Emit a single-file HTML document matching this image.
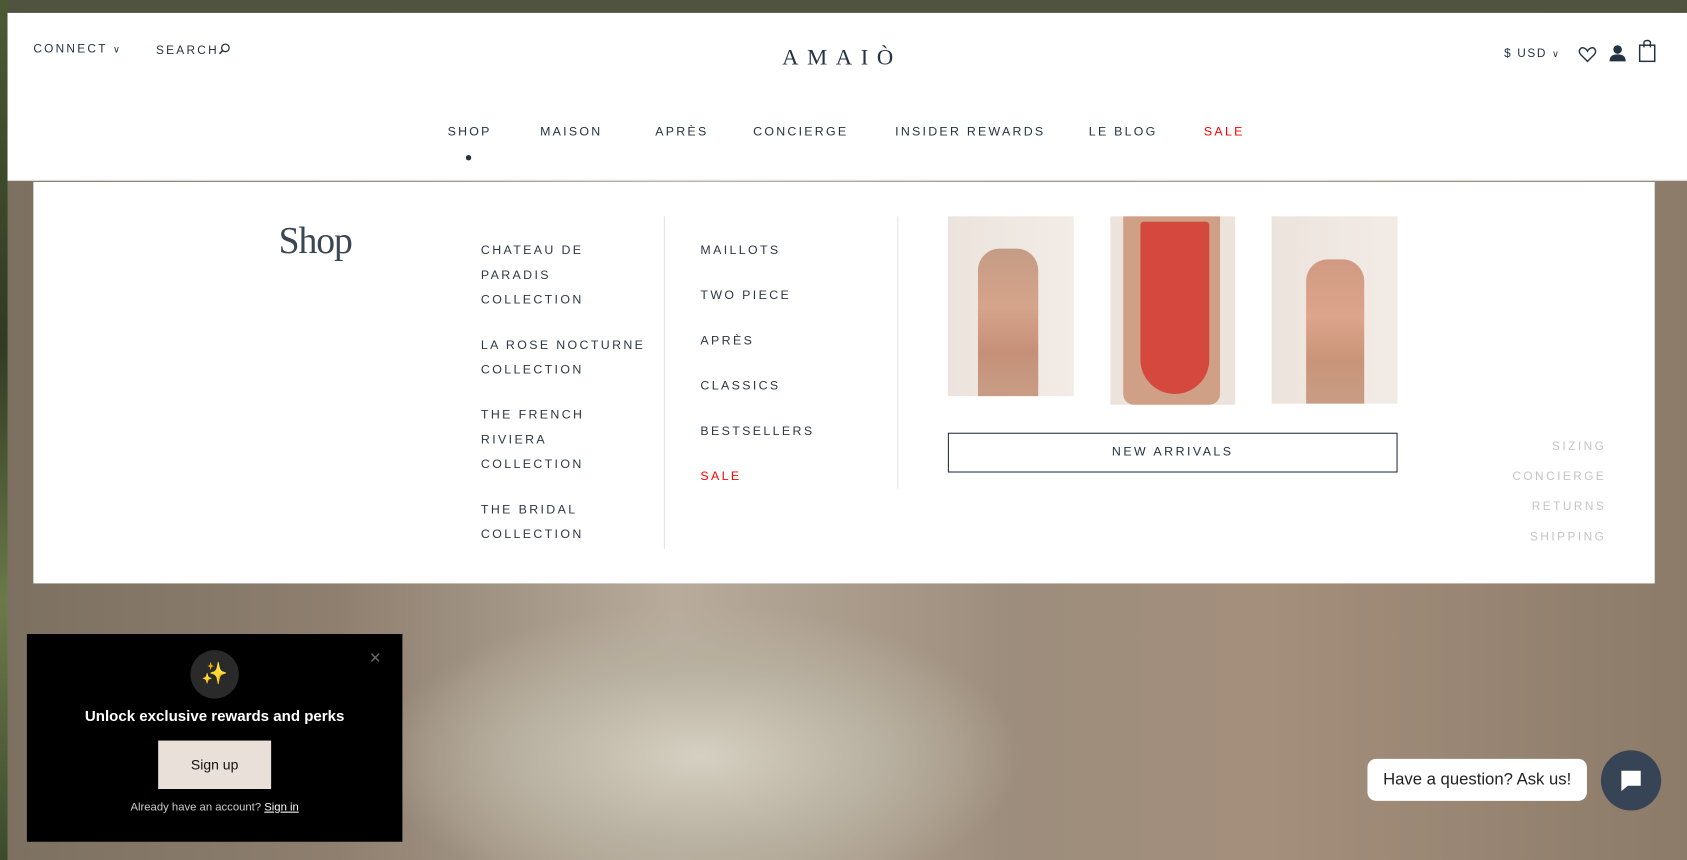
<!DOCTYPE html>
<html><head><meta charset="utf-8"><style>
*{margin:0;padding:0;box-sizing:border-box}
html,body{width:1687px;height:859px;overflow:hidden;background:#8a7c6c}
#w{position:absolute;left:0;top:0;width:1568px;height:799px;transform:scale(1.07589,1.0764);transform-origin:0 0;font-family:"Liberation Sans",sans-serif;color:#243342;overflow:hidden}
.a{position:absolute}
.bg{left:0;top:0;width:1568px;height:799px;background:linear-gradient(90deg,#7c7060 0%,#8e7f6f 20%,#b8ab9c 40%,#9d8d7c 60%,#a48f7c 75%,#8c7b69 100%)}
.nav{font-size:11.5px;letter-spacing:2.1px;white-space:nowrap}
.m{font-size:11.5px;letter-spacing:2.2px;line-height:23px;white-space:nowrap;color:#2c3845}
.r{font-size:11px;letter-spacing:2.3px;color:#c4c4c4;right:75px;text-align:right}
</style></head><body><div id="w">
<div class="a bg"></div>
<div class="a" style="left:0;top:0;width:7px;height:799px;background:linear-gradient(#4c5a34,#2f3b22 40%,#6b7a4a 70%,#3b4a2c)"></div>
<div class="a" style="left:350px;top:560px;width:600px;height:239px;background:radial-gradient(ellipse at 50% 60%,#d6d0c2 0%,#b8b0a0 40%,rgba(0,0,0,0) 70%)"></div>
<div class="a" style="left:7px;top:0;width:1561px;height:12px;background:#50533f"></div>
<div class="a" style="left:7px;top:12px;width:1561px;height:156px;background:#fff;border-bottom:1px solid #ddd"></div>
<div class="a nav" style="left:31px;top:40px;font-size:11px">CONNECT <span style="font-size:9px">&#8744;</span></div>
<div class="a nav" style="left:145px;top:40px;font-size:11px">SEARCH<svg width="11" height="11" viewBox="0 0 11 11" style="vertical-align:-1px"><circle cx="6.5" cy="4.5" r="3.5" fill="none" stroke="#243342" stroke-width="1.2"/><path d="M4 7L1 10" stroke="#243342" stroke-width="1.4"/></svg></div>
<div class="a" style="left:727px;top:41px;font-family:'Liberation Serif',serif;font-size:21px;letter-spacing:8px;color:#243342">AMAIÒ</div>
<div class="a nav" style="left:1398px;top:44px;font-size:11px;letter-spacing:1.5px">$ USD <span style="font-size:9px">&#8744;</span></div>
<svg class="a" style="left:1467px;top:43px" width="17" height="15" viewBox="0 0 17 15"><path d="M8.5 14L2 7.5C-0.5 4.5 2 0.5 5 1.5C6.5 2 8 3.5 8.5 4.5C9 3.5 10.5 2 12 1.5C15 0.5 17.5 4.5 15 7.5Z" fill="none" stroke="#243342" stroke-width="1.3"/></svg>
<svg class="a" style="left:1495px;top:41px" width="17" height="17" viewBox="0 0 17 17"><circle cx="8.5" cy="5" r="4" fill="#243342"/><path d="M1 16C1 11 4 9.5 8.5 9.5S16 11 16 16Z" fill="#243342"/></svg>
<svg class="a" style="left:1523px;top:36px" width="16" height="22" viewBox="0 0 16 22"><rect x="1" y="6" width="14" height="15" fill="none" stroke="#243342" stroke-width="1.4"/><path d="M5 8V3.5C5 1 11 1 11 3.5V8" fill="none" stroke="#243342" stroke-width="1.3"/></svg>
<div class="a nav" style="left:416px;top:117px">SHOP</div>
<div class="a" style="left:433px;top:144px;width:5px;height:5px;border-radius:50%;background:#243342"></div>
<div class="a nav" style="left:502px;top:117px">MAISON</div>
<div class="a nav" style="left:609px;top:117px">APRÈS</div>
<div class="a nav" style="left:700px;top:117px">CONCIERGE</div>
<div class="a nav" style="left:832px;top:117px">INSIDER REWARDS</div>
<div class="a nav" style="left:1012px;top:117px">LE BLOG</div>
<div class="a nav" style="left:1119px;top:117px;color:#f00">SALE</div>
<div class="a" style="left:31px;top:169px;width:1507px;height:373px;background:#fff"></div>
<div class="a" style="left:259px;top:204px;font-family:'Liberation Serif',serif;font-size:35px;color:#3a4652;letter-spacing:-1px">Shop</div>
<div class="a m" style="left:447px;top:222px">CHATEAU DE<br>PARADIS<br>COLLECTION</div>
<div class="a m" style="left:447px;top:310px">LA ROSE NOCTURNE<br>COLLECTION</div>
<div class="a m" style="left:447px;top:375px">THE FRENCH<br>RIVIERA<br>COLLECTION</div>
<div class="a m" style="left:447px;top:463px">THE BRIDAL<br>COLLECTION</div>
<div class="a" style="left:617px;top:201px;width:1px;height:309px;background:#e2e2e2"></div>
<div class="a m" style="left:651px;top:222px">MAILLOTS</div>
<div class="a m" style="left:651px;top:264px">TWO PIECE</div>
<div class="a m" style="left:651px;top:306px">APRÈS</div>
<div class="a m" style="left:651px;top:348px">CLASSICS</div>
<div class="a m" style="left:651px;top:390px">BESTSELLERS</div>
<div class="a m" style="left:651px;top:432px;color:#f00">SALE</div>
<div class="a" style="left:834px;top:201px;width:1px;height:253px;background:#e2e2e2"></div>
<div class="a" style="left:881px;top:201px;width:117px;height:167px;background:linear-gradient(90deg,#ece3dd,#f3ebe5)"><div class="a" style="left:28px;top:30px;width:56px;height:137px;background:linear-gradient(#c59c85 0%,#d5a48a 40%,#c69078 70%,#c89d85);border-radius:20px 20px 0 0"></div></div>
<div class="a" style="left:1032px;top:201px;width:116px;height:175px;background:#ede3dd"><div class="a" style="left:12px;top:0;width:90px;height:175px;background:#cf9f86;border-radius:0 0 10px 10px"></div><div class="a" style="left:28px;top:5px;width:64px;height:160px;background:#d4483d;border-radius:4px 4px 40px 40px"></div></div>
<div class="a" style="left:1182px;top:201px;width:117px;height:174px;background:linear-gradient(90deg,#ece3dd,#f3ebe5)"><div class="a" style="left:32px;top:40px;width:54px;height:134px;background:linear-gradient(#d09a82,#dda58b 40%,#c99478 70%,#c89d85);border-radius:20px 20px 0 0"></div></div>
<div class="a" style="left:881px;top:402px;width:418px;height:37px;border:1.5px solid #243342;text-align:center;line-height:34px;font-size:11.5px;letter-spacing:2.3px;color:#243342">NEW ARRIVALS</div>
<div class="a r" style="top:409px">SIZING</div>
<div class="a r" style="top:437px">CONCIERGE</div>
<div class="a r" style="top:465px">RETURNS</div>
<div class="a r" style="top:493px">SHIPPING</div>
<div class="a" style="left:25px;top:589px;width:349px;height:193px;background:#000"></div>
<div class="a" style="left:177px;top:604px;width:45px;height:45px;border-radius:50%;background:#2a2a2a;color:#f5c518;text-align:center;line-height:45px;font-size:20px">✨</div>
<div class="a" style="left:343px;top:603px;color:#666;font-size:14px">✕</div>
<div class="a" style="left:25px;top:657px;width:349px;text-align:center;color:#fff;font-size:14px;font-weight:bold">Unlock exclusive rewards and perks</div>
<div class="a" style="left:147px;top:688px;width:105px;height:45px;background:#e9e0da;text-align:center;line-height:45px;font-size:13px;color:#111">Sign up</div>
<div class="a" style="left:25px;top:744px;width:349px;text-align:center;color:#ccc;font-size:10.5px">Already have an account? <u style="color:#fff">Sign in</u></div>
<div class="a" style="left:1271px;top:705px;width:204px;height:39px;background:#fff;border-radius:8px;text-align:center;line-height:39px;font-size:15.5px;color:#222">Have a question? Ask us!</div>
<div class="a" style="left:1488px;top:697px;width:56px;height:56px;border-radius:50%;background:#374456"></div>
<svg class="a" style="left:1504px;top:713px" width="24" height="24" viewBox="0 0 24 24"><path d="M3 3H21V17H9L3 22Z" fill="#fff"/></svg>
</div></body></html>
